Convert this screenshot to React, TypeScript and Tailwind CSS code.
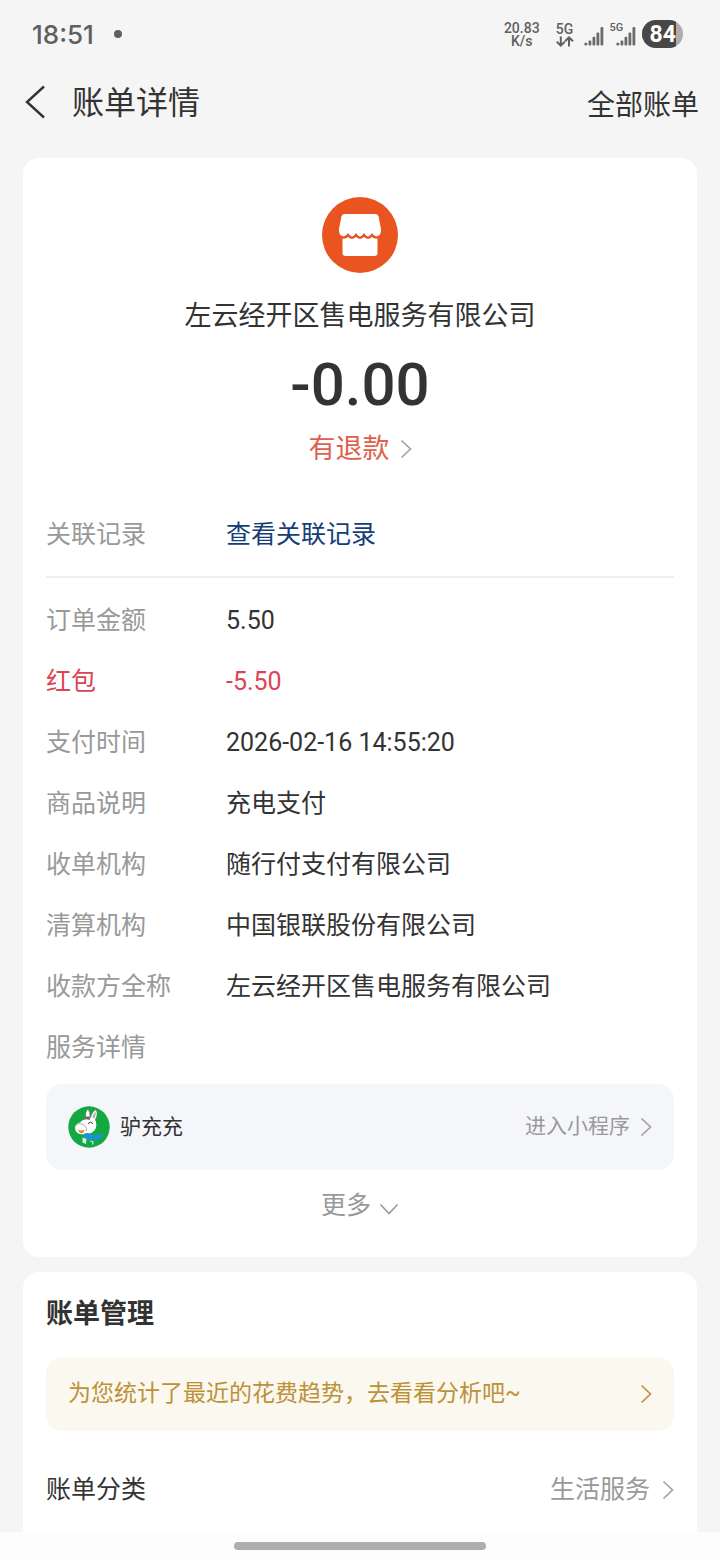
import React from 'react'

type Detail = {
  label: string
  value?: string
  highlight?: boolean
}

const details: Detail[] = [
  { label: '订单金额', value: '5.50' },
  { label: '红包', value: '-5.50', highlight: true },
  { label: '支付时间', value: '2026-02-16 14:55:20' },
  { label: '商品说明', value: '充电支付' },
  { label: '收单机构', value: '随行付支付有限公司' },
  { label: '清算机构', value: '中国银联股份有限公司' },
  { label: '收款方全称', value: '左云经开区售电服务有限公司' },
  { label: '服务详情' },
]

function ChevronRight({ className }: { className?: string }) {
  return (
    <svg viewBox="0 0 12 20" className={`h-5 w-3 shrink-0 ${className ?? ''}`} fill="none" stroke="currentColor" strokeWidth="1.7">
      <path d="M1.5 1.5 L10.5 10 L1.5 18.5" />
    </svg>
  )
}

function Signal() {
  return (
    <svg viewBox="0 0 20 20" className="h-5 w-5" fill="#6a6a6a">
      <circle cx="1.8" cy="18" r="1.6" />
      <rect x="4.5" y="14.5" width="2.8" height="5" rx="1" />
      <rect x="8.5" y="10.8" width="2.8" height="8.7" rx="1" />
      <rect x="12.5" y="6.5" width="2.8" height="13" rx="1" />
      <rect x="16.5" y="1" width="2.8" height="18.5" rx="1" />
    </svg>
  )
}

function StatusBar() {
  return (
    <div className="flex h-[68px] items-center justify-between pl-8 pr-[37px] text-[#606060]">
      <div className="flex items-center gap-5">
        <span className="font-['Inter','Noto_Sans_CJK_SC',sans-serif] text-[26px] font-medium">18:51</span>
        <span className="size-2 rounded-full bg-[#606060]" />
      </div>
      <div className="flex items-center font-medium">
        <div className="pt-0.5 text-center text-sm leading-[13px]">
          <div>20.83</div>
          <div>K/s</div>
        </div>
        <div className="ml-4 flex flex-col items-center pt-0.5 text-sm leading-[13px]">
          <span>5G</span>
          <svg viewBox="0 0 18 11" className="h-[11px] w-[18px]" fill="none" stroke="currentColor" strokeWidth="2">
            <path d="M4.8 0.5 V9.5 M0.8 5.8 L4.8 9.6 L8.8 5.8" />
            <path d="M13 10.5 V1.5 M9 5.2 L13 1.4 L17 5.2" />
          </svg>
        </div>
        <div className="ml-2.5 mt-1">
          <Signal />
        </div>
        <div className="relative ml-3 mt-1">
          <Signal />
          <span className="absolute -left-1.5 -top-1 bg-[#f5f5f5] text-[11px] leading-3">5G</span>
        </div>
        <div className="ml-1.5 h-7 overflow-hidden rounded-full bg-[#adadad]">
          <div className="mr-[7px] h-7 bg-[#474747] pl-2 text-[23px] font-bold leading-[30px] text-white">84</div>
        </div>
      </div>
    </div>
  )
}

function ShopLogo() {
  return (
    <svg viewBox="0 0 76 76" className="size-[76px]">
      <circle cx="38" cy="38" r="38" fill="#e95420" />
      <path d="M20.5 34 H55.5 V56 Q55.5 59 52.5 59 H23.5 Q20.5 59 20.5 56 Z" fill="#fff" />
      <path
        d="M22.500 17 H53.500 Q56 17 56.600 19.500 L59 32 Q59.500 39.500 53.500 39.500 Q51 39.500 49.500 38 H26.500 Q25 39.500 22.500 39.500 Q16.500 39.500 17 32 L19.400 19.500 Q20 17 22.500 17 Z"
        fill="#fff"
      />
      <path
        d="M17 39 Q23 42.500 26 38 Q30 43.500 34 38 Q38 43.500 42 38 Q46 43.500 50 38 Q53 42.500 59 39"
        fill="none"
        stroke="#e95420"
        strokeWidth="2.4"
        strokeLinejoin="miter"
      />
    </svg>
  )
}

function DonkeyLogo() {
  return (
    <svg viewBox="0 0 42 42" className="size-[42px]">
      <circle cx="21" cy="21" r="20.7" fill="#12a943" />
      <path d="M18 11.5 Q16.500 6 20 3 Q22.500 6 22 12 Z" fill="#fff" stroke="#4d6655" strokeWidth=".6" />
      <path d="M22.500 13 Q23 6 28 3.500 Q31 8.500 26.500 15 Z" fill="#fff" stroke="#4d6655" strokeWidth=".6" />
      <path d="M24.500 12 Q25 7.500 27.500 5.800 Q28.500 9 25.800 13 Z" fill="#b5b0ad" />
      <path d="M16 13 Q22 9.500 27 13.500 Q30 19 26.500 24.500 Q22 29 15.500 28.500 Q7.500 28.500 7 22 Q7 17.500 12 16.500 Z" fill="#fff" />
      <path d="M14.800 14 Q16.500 9.500 22.500 10.800 L21.500 14 L18.500 13.200 Z" fill="#6b6a66" />
      <path d="M7.500 20 Q10 16.500 14 18 Q19 20 18.500 25" fill="none" stroke="#7d8c82" strokeWidth=".7" />
      <path d="M20 17.500 Q22.500 14.800 25 17.500" fill="none" stroke="#333" strokeWidth="1" />
      <path d="M10 23.500 Q13 25.500 16.500 23.500 Q15.800 28 12.800 27.200 Q10.500 26.500 10 23.500 Z" fill="#d98a2c" />
      <path d="M15 28.500 Q20 25.500 25 29 L24.500 33.500 Q22 37 19.500 32.500 L16 32 Z" fill="#1d91d8" />
      <path d="M25.500 29.500 Q29.500 28 34.500 28 Q34 32 31.500 33 Q30 35.500 25.500 34 Z" fill="#1d91d8" />
      <path d="M14.500 31.500 L18.500 33 L18 38 L14.500 36.500 Z" fill="#d8f0e0" />
      <path d="M22.500 35 L25 36 L24.500 38.500" fill="none" stroke="#d8f0e0" strokeWidth="1.200" />
    </svg>
  )
}

export default function App() {
  return (
    <div className="min-h-screen bg-[#f5f5f5] font-[Roboto,'Noto_Sans_CJK_SC',sans-serif] text-[25px] text-[#333]">
      <StatusBar />

      <header className="flex h-[68px] items-center justify-between pl-6 pr-[21px]">
        <div className="flex items-center">
          <button type="button" aria-label="返回" className="w-12">
            <svg viewBox="0 0 22 34" className="h-[34px] w-[22px]" fill="none" stroke="currentColor" strokeWidth="2.4">
              <path d="M20 1.5 L3 17 L20 32.5" />
            </svg>
          </button>
          <h1 className="pt-0.5 text-[32px] leading-10">账单详情</h1>
        </div>
        <a href="#all" className="pt-2 text-[28px] leading-10">全部账单</a>
      </header>

      <main className="mt-[22px] flex flex-col gap-[15px] px-[23px]">
        <section className="rounded-2xl bg-white px-[23px] pb-[31px] pt-[39px]">
          <div className="flex flex-col items-center">
            <ShopLogo />
            <h2 className="mt-[23px] text-[27px] leading-10">左云经开区售电服务有限公司</h2>
            <p className="mt-[19px] text-[60px] font-medium leading-[60px]">-0.00</p>
            <a href="#refund" className="mt-3.5 flex items-center gap-2.5 text-[27px] leading-10 text-[#e0604c]">
              有退款
              <ChevronRight className="text-[#a3a3a3]" />
            </a>
          </div>

          <div className="mt-[35px] flex h-[61px] items-center">
            <span className="w-[180px] text-[#999]">关联记录</span>
            <a href="#related" className="text-[#153e78]">查看关联记录</a>
          </div>
          <hr className="mt-[11px] border-t-2 border-[#eee]" />

          <dl className="mt-3">
            {details.map((item) => (
              <div
                key={item.label}
                className={`flex h-[61px] items-center ${item.highlight ? 'text-[#dc4455]' : ''}`}
              >
                <dt className={`w-[180px] ${item.highlight ? '' : 'text-[#999]'}`}>{item.label}</dt>
                {item.value && <dd>{item.value}</dd>}
              </div>
            ))}
          </dl>

          <a href="#mini" className="mt-1.5 flex h-[86px] items-center rounded-2xl bg-[#f5f6fa] px-[22px] text-[21px]">
            <DonkeyLogo />
            <span className="ml-2.5 pt-0.5">驴充充</span>
            <span className="ml-auto mr-2.5 text-[#999]">进入小程序</span>
            <ChevronRight className="text-[#a3a3a3]" />
          </a>

          <button type="button" className="mx-auto mt-4 flex items-center gap-2 leading-10 text-[#999]">
            更多
            <svg viewBox="0 0 20 12" className="mt-1.5 h-3 w-5" fill="none" stroke="currentColor" strokeWidth="1.6">
              <path d="M1.5 1.5 L10 10.5 L18.5 1.5" />
            </svg>
          </button>
        </section>

        <section className="rounded-t-2xl bg-white px-[23px] pb-3 pt-[22px]">
          <h2 className="text-[27px] font-bold leading-10">账单管理</h2>
          <a href="#analysis" className="mt-[23px] flex h-[74px] items-center justify-between rounded-2xl bg-[#fbf8ef] px-[22px] text-[23px] text-[#bc9239]">
            为您统计了最近的花费趋势，去看看分析吧~
            <ChevronRight />
          </a>
          <a href="#category" className="mt-7 flex h-[61px] items-center">
            <span>账单分类</span>
            <span className="ml-auto mr-3 text-[#999]">生活服务</span>
            <ChevronRight className="text-[#a3a3a3]" />
          </a>
        </section>
      </main>

      <footer className="flex h-7 items-center justify-center bg-[#fdfdfd]">
        <div className="h-2 w-[35%] rounded-full bg-[#aeaeae]" />
      </footer>
    </div>
  )
}
